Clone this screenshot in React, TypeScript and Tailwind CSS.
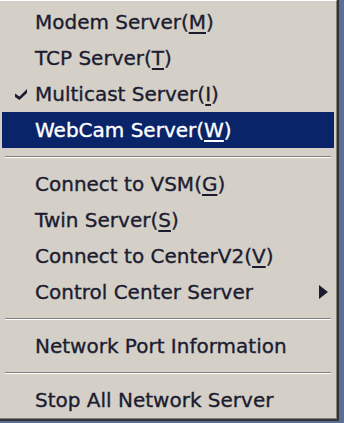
import React from 'react';

type Item =
    | { kind: 'sep' }
    | { kind: 'item'; label: string; key?: string; checked?: boolean; active?: boolean; submenu?: boolean };

const items: Item[] = [
    { kind: 'item', label: 'Modem Server', key: 'M' },
    { kind: 'item', label: 'TCP Server', key: 'T' },
    { kind: 'item', label: 'Multicast Server', key: 'I', checked: true },
    { kind: 'item', label: 'WebCam Server', key: 'W', active: true },
    { kind: 'sep' },
    { kind: 'item', label: 'Connect to VSM', key: 'G' },
    { kind: 'item', label: 'Twin Server', key: 'S' },
    { kind: 'item', label: 'Connect to CenterV2', key: 'V' },
    { kind: 'item', label: 'Control Center Server', submenu: true },
    { kind: 'sep' },
    { kind: 'item', label: 'Network Port Information' },
    { kind: 'sep' },
    { kind: 'item', label: 'Stop All Network Server' },
];

function Check() {
    return (
        <svg width="12" height="11" viewBox="0 0 12 11">
            <path d="M0 4.5 L4.5 7.5 L12 0 L12 4 L4.5 11 L0 8 Z" fill="currentColor" />
        </svg>
    );
}

function Arrow() {
    return (
        <svg width="9" height="14" viewBox="0 0 9 14">
            <path d="M0 0 L9 7 L0 14 Z" fill="currentColor" />
        </svg>
    );
}

export default function App() {
    return (
        <div className="w-[344px] h-[423px] flex bg-[#5a6f96] overflow-hidden">
            <div className="h-[421px] flex border-r-2 border-r-[#333] border-b-2 border-b-[#333]">
                <div className="w-[337px] flex flex-col bg-[#d4d0c8] border-t border-t-white border-r border-r-[#808080] border-b border-b-[#808080] pt-[3px] px-[2px] font-['DejaVu_Sans',sans-serif] text-[20px] text-[#1c1c30] [-webkit-text-stroke:0.35px_currentColor]">
                    {items.map((it, i) =>
                        it.kind === 'sep' ? (
                            <div key={i} className="h-[18px] flex flex-col justify-center px-[3px]">
                                <div className="h-px bg-[#808080]" />
                                <div className="h-px bg-white" />
                            </div>
                        ) : (
                            <div
                                key={i}
                                className={`h-[36px] flex items-center ${it.active ? 'bg-[#0a246a] text-white' : ''}`}
                            >
                                <div className="w-[33px] flex justify-center pl-[4px]">{it.checked && <Check />}</div>
                                <span className="flex-1 whitespace-nowrap">
                                    {it.label}
                                    {it.key && (
                                        <>
                                            (<span className="underline underline-offset-[3px]">{it.key}</span>)
                                        </>
                                    )}
                                </span>
                                {it.submenu && (
                                    <div className="w-[24px] pr-[6px] flex justify-end">
                                        <Arrow />
                                    </div>
                                )}
                            </div>
                        ),
                    )}
                </div>
            </div>
        </div>
    );
}
